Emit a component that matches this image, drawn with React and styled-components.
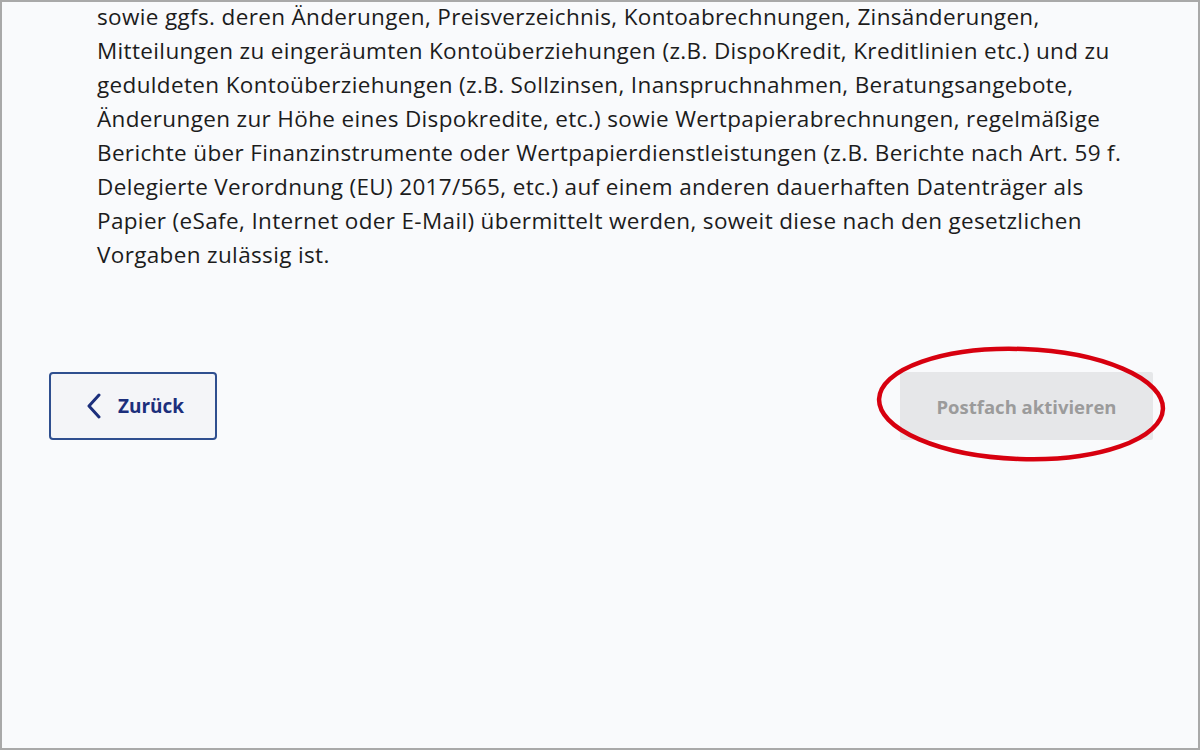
import React from "react";
import styled, { createGlobalStyle } from "styled-components";

const Global = createGlobalStyle`
  html, body { margin: 0; padding: 0; background: #f9fafc; }
  * { box-sizing: border-box; }
`;

const Frame = styled.div`
  width: 1200px;
  height: 750px;
  border: 2px solid #a9a9a9;
  background: #f9fafc;
  font-family: "Open Sans", "Noto Sans", sans-serif;
  overflow: hidden;
  display: flex;
  flex-direction: column;
`;

const Body = styled.p`
  margin: -2px 0 0;
  padding: 0 0 0 95px;
  font-size: 22.5px;
  line-height: 34px;
  color: #1c1c1c;
  letter-spacing: 0.35px;
  white-space: nowrap;
`;

const Actions = styled.div`
  display: flex;
  justify-content: space-between;
  align-items: center;
  margin-top: 100px;
  padding: 0 45px 0 47px;
`;

const BackButton = styled.button`
  width: 168px;
  height: 68px;
  display: flex;
  align-items: center;
  justify-content: center;
  gap: 16px;
  padding: 0 0 0 4px;
  border: 2px solid #2f4f8f;
  border-radius: 4px;
  background: #f4f5f8;
  color: #1c2f7c;
  font-family: inherit;
  font-size: 19px;
  font-weight: 700;
  cursor: pointer;
`;

const PrimaryWrap = styled.div`
  position: relative;
`;

const DisabledButton = styled.button`
  width: 253px;
  height: 68px;
  border: none;
  border-radius: 2px;
  background: #e6e7e9;
  color: #9b9b9b;
  font-family: inherit;
  font-size: 18.5px;
  font-weight: 700;
`;

const Marker = styled.svg`
  position: absolute;
  left: -24px;
  top: -26px;
  width: 292px;
  height: 120px;
  pointer-events: none;
  overflow: visible;
`;

export default function App() {
  return (
    <>
      <Global />
      <Frame>
        <Body>
          sowie ggfs. deren Änderungen, Preisverzeichnis, Kontoabrechnungen, Zinsänderungen,<br />
          Mitteilungen zu eingeräumten Kontoüberziehungen (z.B. DispoKredit, Kreditlinien etc.) und zu<br />
          geduldeten Kontoüberziehungen (z.B. Sollzinsen, Inanspruchnahmen, Beratungsangebote,<br />
          Änderungen zur Höhe eines Dispokredite, etc.) sowie Wertpapierabrechnungen, regelmäßige<br />
          Berichte über Finanzinstrumente oder Wertpapierdienstleistungen (z.B. Berichte nach Art. 59 f.<br />
          Delegierte Verordnung (EU) 2017/565, etc.) auf einem anderen dauerhaften Datenträger als<br />
          Papier (eSafe, Internet oder E-Mail) übermittelt werden, soweit diese nach den gesetzlichen<br />
          Vorgaben zulässig ist.
        </Body>
        <Actions>
          <BackButton>
            <svg width="16" height="26" viewBox="0 0 16 26" fill="none">
              <path d="M13 2 L3 13 L13 24" stroke="#1c2f7c" strokeWidth="3" strokeLinecap="round" strokeLinejoin="round" />
            </svg>
            Zurück
          </BackButton>
          <PrimaryWrap>
            <DisabledButton disabled>Postfach aktivieren</DisabledButton>
            <Marker viewBox="0 0 292 120">
              <ellipse cx="145" cy="58" rx="142" ry="55" fill="none" stroke="#d7000f" strokeWidth="4.5" transform="rotate(2 145 58)" />
            </Marker>
          </PrimaryWrap>
        </Actions>
      </Frame>
    </>
  );
}
